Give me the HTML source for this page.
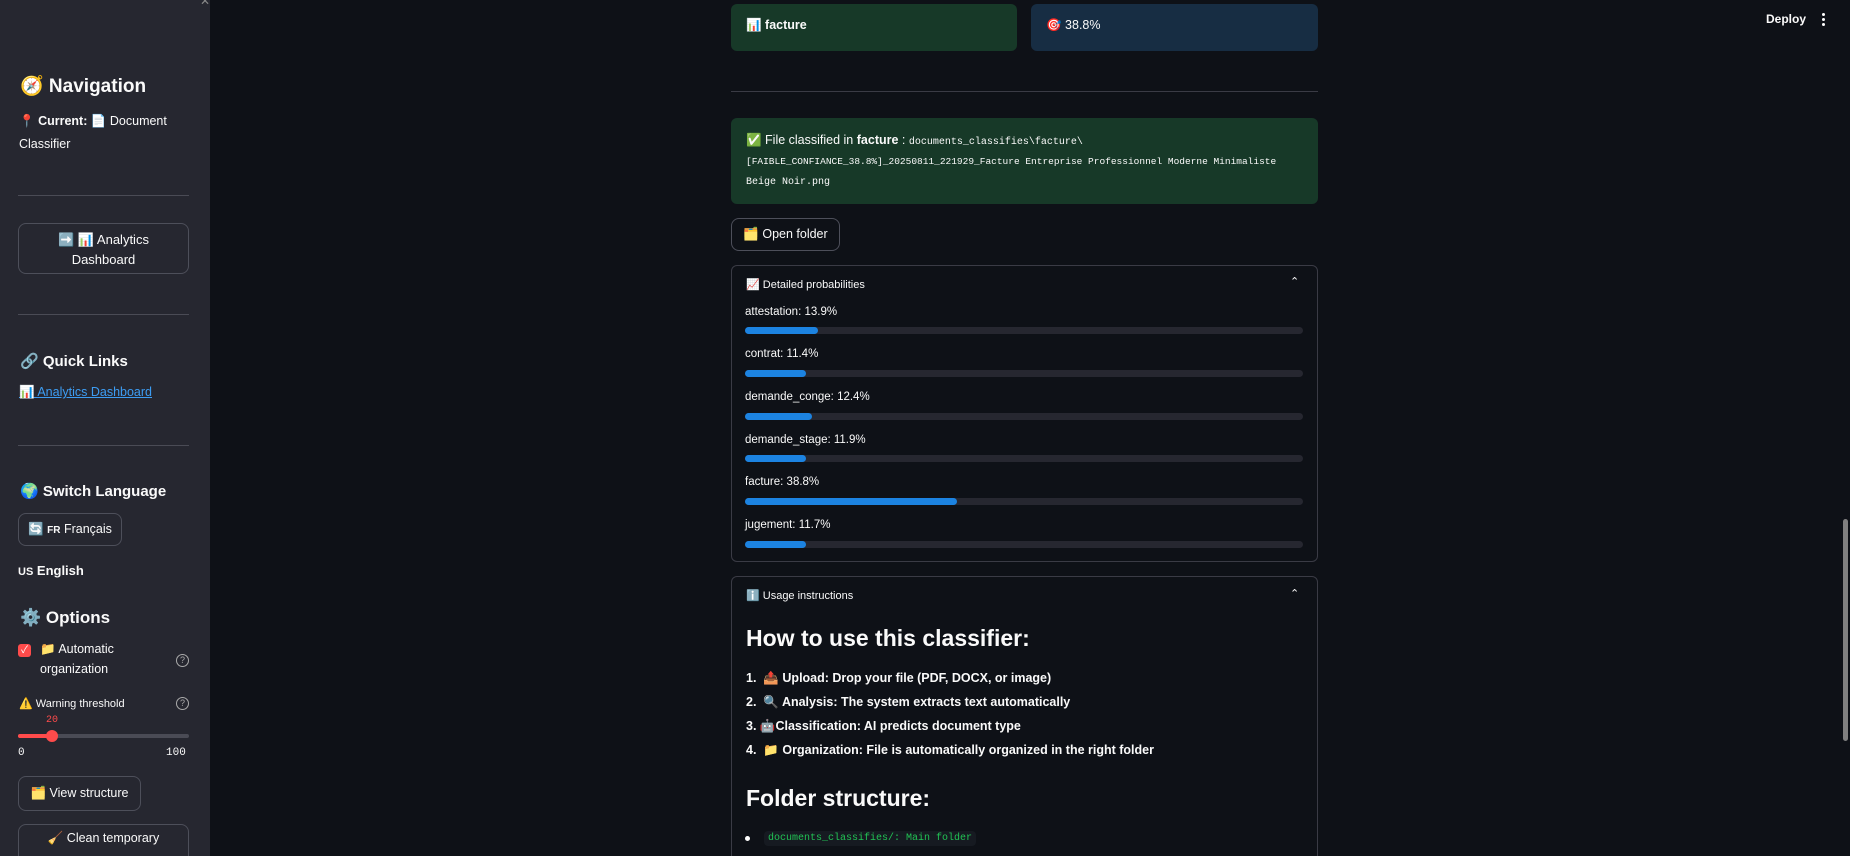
<!DOCTYPE html>
<html><head><meta charset="utf-8"><style>
*{box-sizing:border-box;margin:0;padding:0}
html{width:1850px;height:856px;overflow:hidden}
body{width:1850px;height:856px;overflow:hidden;background:#0e1117;color:#fafafa;font-family:"Liberation Sans","Noto Sans CJK JP",sans-serif;position:relative}
.a{position:absolute;white-space:nowrap}
#sb{position:absolute;left:0;top:0;width:210px;height:856px;background:#262730;overflow:hidden}
.hr{position:absolute;height:1px;background:#4a4b55}
.btn{position:absolute;border:1px solid #4d4f5a;border-radius:8px;font-size:14px;color:#fafafa;text-align:center}
.mono{font-family:"Liberation Mono",monospace}
.bar{position:absolute;left:745px;width:558px;height:7px;border-radius:4px;background:#262730}
.bar i{display:block;height:7px;border-radius:4px;background:#1c83e1}
.lbl{position:absolute;left:745px;font-size:11.5px;color:#fafafa}
.li{position:absolute;left:746px;font-size:12.5px;font-weight:bold}
</style></head><body>
<div id="sb">
<div class="a" style="left:200px;top:-6px;color:#888;font-size:12px">✕</div>
<div class="a" style="left:20px;top:74px;font-size:19px;font-weight:bold">🧭 Navigation</div>
<div class="a" style="left:19px;top:114px;font-size:12.5px"><span style="color:#e0357b">📍</span> <b>Current:</b> 📄 Document</div>
<div class="a" style="left:19px;top:137px;font-size:12.5px">Classifier</div>
<div class="hr" style="left:18px;top:195px;width:171px"></div>
<div class="btn" style="left:18px;top:223px;width:171px;height:51px;padding-top:6px;line-height:20px;font-size:13px">➡️ 📊 Analytics<br>Dashboard</div>
<div class="hr" style="left:18px;top:314px;width:171px"></div>
<div class="a" style="left:20px;top:352px;font-size:15px;font-weight:bold">🔗 Quick Links</div>
<div class="a" style="left:19px;top:385px;font-size:12.5px;color:#3d9df3;text-decoration:underline">📊 Analytics Dashboard</div>
<div class="hr" style="left:18px;top:445px;width:171px"></div>
<div class="a" style="left:20px;top:482px;font-size:15px;font-weight:bold">🌍 Switch Language</div>
<div class="btn" style="left:18px;top:513px;width:104px;height:33px;line-height:31px;font-size:12.5px">🔄 <span style="font-size:10px;font-weight:bold">FR</span> Français</div>
<div class="a" style="left:18px;top:563px;font-size:13px;font-weight:bold"><span style="font-size:11px">US</span> English</div>
<div class="a" style="left:20px;top:608px;font-size:17px;font-weight:bold">⚙️ Options</div>
<div class="a" style="left:18px;top:644px;width:13px;height:13px;background:#ff4b4b;border-radius:3px;color:#fff;font-size:10px;text-align:center;line-height:13px">✓</div>
<div class="a" style="left:40px;top:642px;font-size:12.5px">📁 Automatic</div>
<div class="a" style="left:40px;top:662px;font-size:12.5px">organization</div>
<div class="a" style="left:176px;top:654px;width:13px;height:13px;border:1px solid #aaa;border-radius:50%;font-size:9px;text-align:center;line-height:11px;color:#aaa">?</div>
<div class="a" style="left:19px;top:697px;font-size:11px">⚠️ Warning threshold</div>
<div class="a" style="left:176px;top:697px;width:13px;height:13px;border:1px solid #aaa;border-radius:50%;font-size:9px;text-align:center;line-height:11px;color:#aaa">?</div>
<div class="a mono" style="left:46px;top:715px;font-size:10px;color:#ff4b4b">20</div>
<div class="a" style="left:18px;top:734px;width:171px;height:4px;background:#4a4b55;border-radius:2px"></div>
<div class="a" style="left:18px;top:734px;width:34px;height:4px;background:#ff4b4b;border-radius:2px"></div>
<div class="a" style="left:46px;top:730px;width:12px;height:12px;background:#ff4b4b;border-radius:50%"></div>
<div class="a mono" style="left:18px;top:747px;font-size:11px">0</div>
<div class="a mono" style="left:166px;top:747px;font-size:11px">100</div>
<div class="btn" style="left:18px;top:776px;width:123px;height:35px;line-height:33px;font-size:12.5px">🗂️ View structure</div>
<div class="btn" style="left:18px;top:824px;width:171px;height:50px;padding-top:6px;font-size:12.5px">🧹 Clean temporary</div>
</div>

<div class="a" style="left:1766px;top:12px;font-size:12px;font-weight:bold">Deploy</div>
<div class="a" style="left:1822px;top:13px;width:3px;height:3px;background:#fff;border-radius:50%;box-shadow:0 5px 0 #fff,0 10px 0 #fff"></div>
<div class="a" style="left:1843px;top:519px;width:5px;height:222px;background:#808080;border-radius:3px"></div>

<div class="a" style="left:731px;top:4px;width:286px;height:47px;background:#173928;border-radius:6px"></div>
<div class="a" style="left:746px;top:18px;font-size:12.5px;font-weight:bold">📊 facture</div>
<div class="a" style="left:1031px;top:4px;width:287px;height:47px;background:#172d43;border-radius:6px"></div>
<div class="a" style="left:1046px;top:18px;font-size:12.5px">🎯 38.8%</div>
<div class="hr" style="left:731px;top:91px;width:587px;background:#3a3b45"></div>

<div class="a" style="left:731px;top:118px;width:587px;height:86px;background:#173928;border-radius:6px"></div>
<div class="a" style="left:746px;top:133px;font-size:12.5px">✅ File classified in <b>facture</b> : <span class="mono" style="font-size:10px">documents_classifies\facture\</span></div>
<div class="a mono" style="left:746px;top:156px;font-size:9.5px">[FAIBLE_CONFIANCE_38.8%]_20250811_221929_Facture Entreprise Professionnel Moderne Minimaliste</div>
<div class="a mono" style="left:746px;top:177px;font-size:10px">Beige Noir.png</div>

<div class="btn" style="left:731px;top:218px;width:109px;height:33px;line-height:31px;font-size:12.5px">🗂️ Open folder</div>

<div class="a" style="left:731px;top:265px;width:587px;height:297px;border:1px solid #3a3b45;border-radius:6px"></div>
<div class="a" style="left:746px;top:278px;font-size:11px">📈 Detailed probabilities</div>
<div class="a" style="left:1290px;top:275px;font-size:11px">⌃</div>
<div class="lbl" style="top:306px">attestation: 13.9%</div><div class="bar" style="top:327px"><i style="width:73px"></i></div>
<div class="lbl" style="top:348px">contrat: 11.4%</div><div class="bar" style="top:370px"><i style="width:61px"></i></div>
<div class="lbl" style="top:391px">demande_conge: 12.4%</div><div class="bar" style="top:413px"><i style="width:67px"></i></div>
<div class="lbl" style="top:434px">demande_stage: 11.9%</div><div class="bar" style="top:455px"><i style="width:61px"></i></div>
<div class="lbl" style="top:476px">facture: 38.8%</div><div class="bar" style="top:498px"><i style="width:212px"></i></div>
<div class="lbl" style="top:519px">jugement: 11.7%</div><div class="bar" style="top:541px"><i style="width:61px"></i></div>

<div class="a" style="left:731px;top:576px;width:587px;height:300px;border:1px solid #3a3b45;border-radius:6px"></div>
<div class="a" style="left:746px;top:589px;font-size:11px">ℹ️ Usage instructions</div>
<div class="a" style="left:1290px;top:587px;font-size:11px">⌃</div>
<div class="a" style="left:746px;top:625px;font-size:23px;font-weight:bold">How to use this classifier:</div>
<div class="li" style="top:671px">1.&nbsp; 📤 Upload: Drop your file (PDF, DOCX, or image)</div>
<div class="li" style="top:695px">2.&nbsp; 🔍 Analysis: The system extracts text automatically</div>
<div class="li" style="top:719px">3.&nbsp;🤖Classification: AI predicts document type</div>
<div class="li" style="top:743px">4.&nbsp; 📁 Organization: File is automatically organized in the right folder</div>
<div class="a" style="left:746px;top:785px;font-size:23px;font-weight:bold">Folder structure:</div>
<div class="a" style="left:745px;top:836px;width:5px;height:5px;background:#fff;border-radius:50%"></div>
<div class="a mono" style="left:764px;top:831px;padding:2px 4px;background:#161a21;border-radius:4px;color:#21c354;font-size:10px">documents_classifies/: Main folder</div>
</body></html>
